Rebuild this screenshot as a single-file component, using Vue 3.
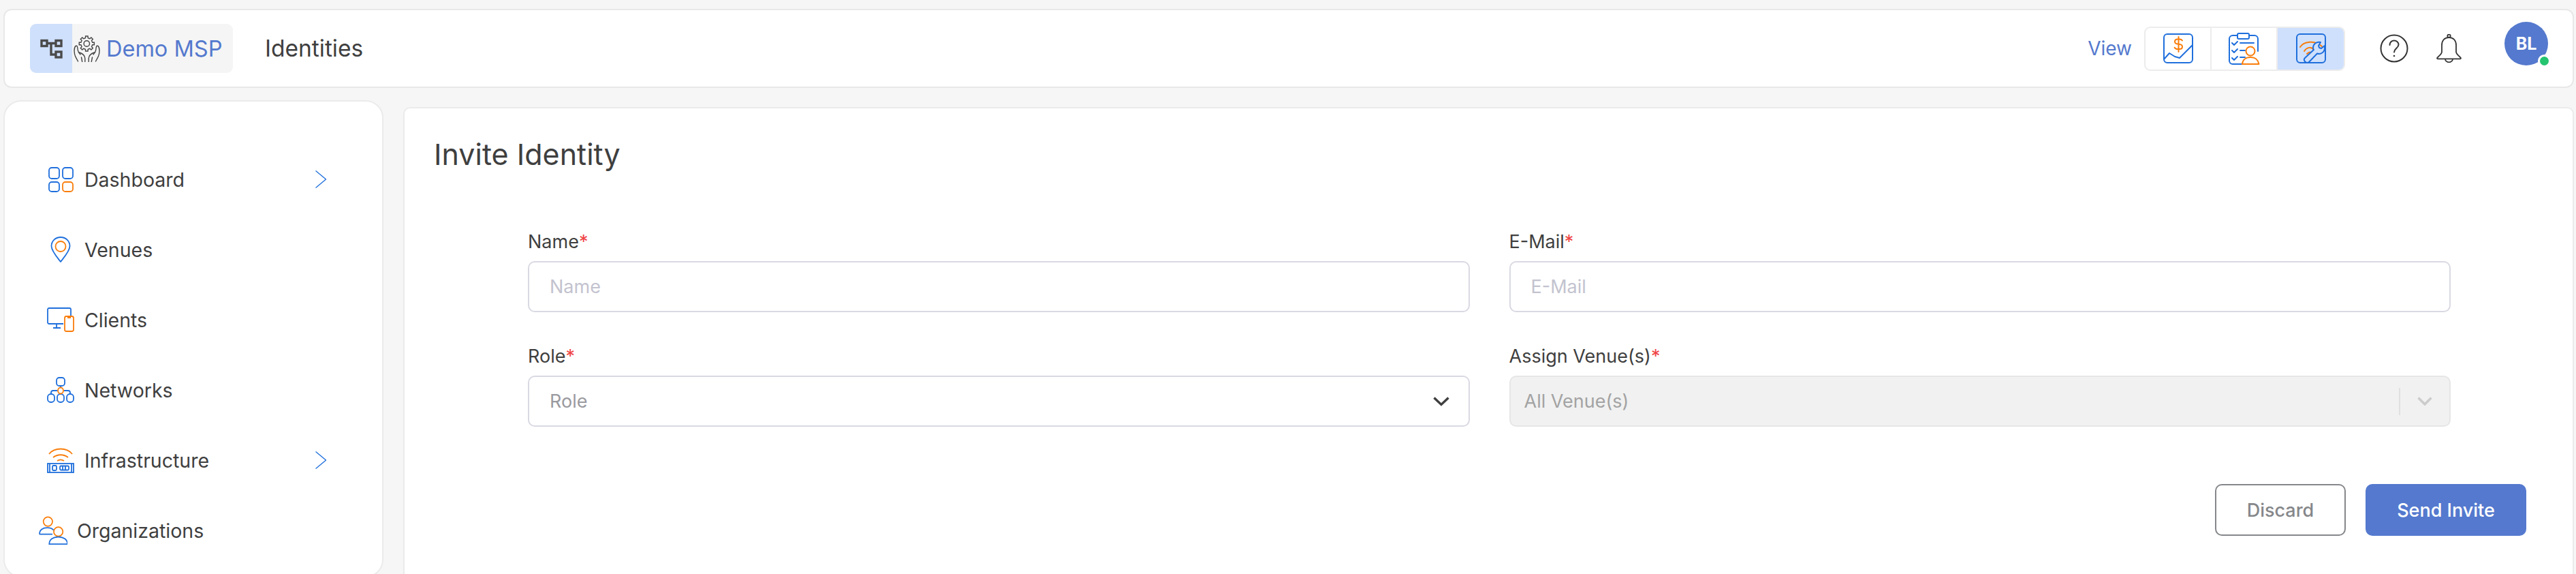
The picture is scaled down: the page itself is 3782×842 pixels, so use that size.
<script setup>
const navItems = [
  { label: 'Dashboard', icon: 'dashboard', arrow: true },
  { label: 'Venues', icon: 'venues' },
  { label: 'Clients', icon: 'clients' },
  { label: 'Networks', icon: 'networks' },
  { label: 'Infrastructure', icon: 'infra', arrow: true },
  { label: 'Organizations', icon: 'orgs' }
];

// gear outline for the MSP logo
const gearPath = (() => {
  const pts = [];
  const teeth = 8;
  for (let i = 0; i < teeth; i++) {
    const a = (i / teeth) * Math.PI * 2;
    const step = (Math.PI * 2) / teeth;
    [[-0.5, 8.4], [-0.27, 8.6], [-0.2, 11.2], [0.2, 11.2], [0.27, 8.6]].forEach(([o, r]) => {
      const t = a + o * step;
      pts.push(`${(18.8 + Math.cos(t) * r).toFixed(2)} ${(12 + Math.sin(t) * r).toFixed(2)}`);
    });
  }
  return 'M' + pts.join(' L') + ' Z';
})();
</script>

<template>
  <div class="page">
    <header class="topbar">
      <div class="crumb">
        <div class="crumb-tree">
          <svg width="33" height="29" viewBox="0 0 33 29" fill="none" stroke="#4a4a4a" stroke-width="3.4">
            <rect x="2" y="2.5" width="8" height="8" />
            <rect x="23" y="2.5" width="8" height="8" />
            <rect x="23" y="19" width="8" height="8" />
            <path d="M10 6.500H23M16 6.500V23H23" />
          </svg>
        </div>
        <div class="crumb-tenant">
          <svg width="39" height="39" viewBox="0 0 38 39" fill="none" stroke="#444" stroke-width="1.4" stroke-linecap="round">
            <path :d="gearPath" />
            <circle cx="18.8" cy="12" r="4.2" />
            <g>
              <path d="M2.5 15.5C0 18 .2 22 1 27c.7 4.500 3 7 5 11" />
              <path d="M2.5 15.5c2.5-1.500 3 2 3.300 6 .3 3 1.800 4.500 3.700 6.500" />
              <path d="M8 25c4.500 1.500 8 4 8.300 8.500V38.500M11 32l1.200 6.500" />
            </g>
            <g transform="translate(38 0) scale(-1 1)">
              <path d="M2.5 15.5C0 18 .2 22 1 27c.7 4.500 3 7 5 11" />
              <path d="M2.5 15.5c2.5-1.500 3 2 3.300 6 .3 3 1.800 4.500 3.700 6.500" />
              <path d="M8 25c4.500 1.500 8 4 8.300 8.500V38.500M11 32l1.200 6.500" />
            </g>
          </svg>
          <span class="tenant-name">Demo MSP</span>
        </div>
      </div>
      <span class="page-name">Identities</span>

      <div class="topbar-right">
        <span class="view-label">View</span>
        <div class="view-toggle">
          <div class="view-opt">
            <svg width="44" height="44" viewBox="0 0 44 44" fill="none" stroke-width="2" stroke-linecap="round" stroke-linejoin="round">
              <rect x="1" y="1" width="42" height="42" rx="5" stroke="#1f6fdc" />
              <path d="M1 38l8-9 8 5 7 2 19-19" stroke="#1f6fdc" stroke-linecap="butt" />
              <path d="M28 10.500c-1-1.500-2.500-2-4-2h-3c-2.500 0-4 1.500-4 3.500s1.500 3.200 4 3.500l3 .4c2.500.3 4 1.500 4 3.600s-1.500 3.500-4 3.500h-3c-2 0-3.500-.8-4.300-2.300M22.500 5v22" stroke="#f97d0b" />
            </svg>
          </div>
          <div class="view-opt">
            <svg class="overflow" width="46" height="46" viewBox="0 0 46 46" fill="none" stroke-width="2" stroke-linecap="round" stroke-linejoin="round">
              <path d="M13 4H6a5 5 0 0 0-5 5v32a5 5 0 0 0 5 5h14M31 4h7a5 5 0 0 1 5 5v18" stroke="#1f6fdc" />
              <rect x="13" y="1" width="17" height="8" rx="2" stroke="#1f6fdc" />
              <path d="M5 15l3 3 5-5M5 26l3 3 5-5M5 37l3 3 5-5M17 15h20M17 26h7M17 36h7" stroke="#1f6fdc" />
              <circle cx="32" cy="27" r="6.500" stroke="#f97d0b" />
              <path d="M20 46c.5-6 5-10 12-10s11.500 4 12.500 10z" stroke="#f97d0b" />
            </svg>
          </div>
          <div class="view-opt active">
            <svg class="overflow" width="44" height="44" viewBox="0 0 44 44" fill="none" stroke-width="2" stroke-linecap="round" stroke-linejoin="round">
              <rect x="1" y="1" width="42" height="42" rx="5" stroke="#1f6fdc" />
              <path d="M6 20C11 12 28 9 38 19M12 26c3-5 9-7 13-3M16 30c2-2 4-3 6-2" stroke="#f97d0b" />
              <path d="M36 13c-6-1.500-11 3-11 8 0 1 0 2 1 3L13 36c-3 3 1 9 6 6l12-12.500c5 2 11-2 11-8v-3.500l-5 4-3-1-1-3z" fill="#cfe0fc" stroke="#1f6fdc" />
            </svg>
          </div>
        </div>
        <svg class="help" width="42" height="42" viewBox="0 0 42 42" fill="none" stroke="#333" stroke-width="2">
          <circle cx="21" cy="21" r="19.500" />
          <path d="M14.500 16c0-4 3-6.500 6.500-6.500s6.500 2.500 6.500 6c0 5-6.500 5.500-6.500 11" stroke-linecap="round" />
          <circle cx="21" cy="32" r="1.300" fill="#333" stroke="none" />
        </svg>
        <svg class="bell" width="37" height="42" viewBox="0 0 37 42" fill="none" stroke="#333" stroke-width="1.800" stroke-linejoin="round">
          <circle cx="18.500" cy="2.800" r="2.200" />
          <path d="M18.500 5c-7 0-10.500 5-10.500 11v10c0 3-3 5-6.500 8.500-.8 1-.5 1.800.5 1.800h33c1 0 1.300-.8.500-1.800C32 31 29 29 29 26V16C29 10 25.500 5 18.500 5z" />
          <path d="M13 36.300c0 3 2.500 5 5.500 5s5.500-2 5.500-5" />
        </svg>
        <div class="avatar">
          BL
          <span class="status"></span>
        </div>
      </div>
    </header>

    <div class="content">
      <aside class="sidebar">
        <nav class="nav">
          <div
            v-for="item in navItems"
            :key="item.label"
            :class="['nav-item', { 'nav-org': item.icon === 'orgs' }]"
          >
            <span class="nav-icon">
              <svg v-if="item.icon === 'dashboard'" width="37" height="37" viewBox="0 0 37 37" fill="none" stroke="#1f6fdc" stroke-width="1.800">
                <rect x="1" y="1" width="15" height="16" rx="4" />
                <rect x="21" y="1" width="15" height="16" rx="4" />
                <rect x="1" y="22" width="15" height="14" rx="4" />
                <rect x="21" y="22" width="15" height="14" rx="4" stroke="#f97d0b" />
              </svg>
              <svg v-else-if="item.icon === 'venues'" width="30" height="38" viewBox="0 0 30 38" fill="none" stroke-width="1.800">
                <path d="M15 1C7 1 1.500 7 1.500 14c0 7 8 16 13.500 23C20.500 30 28.500 21 28.500 14 28.500 7 23 1 15 1z" stroke="#1f6fdc" stroke-linejoin="round" />
                <circle cx="15" cy="14.500" r="7.500" stroke="#f97d0b" />
              </svg>
              <svg v-else-if="item.icon === 'clients'" width="40" height="36" viewBox="0 0 40 36" fill="none" stroke-width="1.800">
                <path d="M24 24H3a2 2 0 0 1-2-2V3a2 2 0 0 1 2-2h30a2 2 0 0 1 2 2v9" stroke="#1f6fdc" />
                <path d="M14 24v6M9 30h11" stroke="#1f6fdc" />
                <rect x="26" y="13" width="13" height="22" rx="2.500" stroke="#f97d0b" />
                <path d="M30 15h5" stroke="#f97d0b" stroke-width="2" />
              </svg>
              <svg v-else-if="item.icon === 'networks'" width="40" height="38" viewBox="0 0 40 38" fill="none" stroke="#1f6fdc" stroke-width="1.800">
                <rect x="14" y="1" width="12" height="12" rx="4" />
                <rect x="1" y="25" width="10" height="12" rx="4.500" />
                <rect x="15" y="25" width="10" height="12" rx="4.500" />
                <rect x="29" y="25" width="10" height="12" rx="4.500" />
                <path d="M20 13v3M6 25v-2a3 3 0 0 1 3-3h6M34 25v-2a3 3 0 0 0-3-3h-6M20 24v1" />
                <ellipse cx="20" cy="20" rx="4" ry="4.500" stroke="#f97d0b" />
              </svg>
              <svg v-else-if="item.icon === 'infra'" width="40" height="38" viewBox="0 0 40 38" fill="none" stroke-width="1.800">
                <path d="M3 10C11 0 29 0 37 10M9 15c6-5 16-5 22 0M15 20c3-2 7-2 10 0" stroke="#f97d0b" />
                <rect x="1" y="24" width="38" height="13" stroke="#1f6fdc" />
                <path d="M4 24v13M36 24v13" stroke="#1f6fdc" />
                <rect x="8" y="27" width="6" height="7" rx="1.500" stroke="#1f6fdc" />
                <rect x="19" y="27.500" width="13" height="6" rx="1.500" stroke="#1f6fdc" />
                <path d="M23 28v5M27 28v5" stroke="#1f6fdc" />
              </svg>
              <svg v-else-if="item.icon === 'orgs'" width="44" height="44" viewBox="0 0 44 44" fill="none" stroke-width="1.800">
                <circle cx="14" cy="8.500" r="7" stroke="#f97d0b" />
                <path d="M1 28c0-7 5-10 12-10 5 0 8 1.500 10 4M1 28h20" stroke="#1f6fdc" />
                <circle cx="30" cy="24" r="7" stroke="#f97d0b" />
                <path d="M16 43c0-7 6-11 14-11s14 4 14 11z" stroke="#1f6fdc" />
              </svg>
            </span>
            <span class="nav-label">{{ item.label }}</span>
            <svg v-if="item.arrow" class="nav-arrow" width="16" height="26" viewBox="0 0 16 26" fill="none" stroke="#1f6fdc" stroke-width="1.300">
              <path d="M.5 .5 15.500 13 .5 25.500" />
            </svg>
          </div>
        </nav>
      </aside>

      <main class="panel">
        <h1 class="panel-title">Invite Identity</h1>
        <form class="form" @submit.prevent>
          <div class="field">
            <label class="field-label">Name<span class="req">*</span></label>
            <input class="control" type="text" placeholder="Name" />
          </div>
          <div class="field">
            <label class="field-label">E-Mail<span class="req">*</span></label>
            <input class="control" type="text" placeholder="E-Mail" />
          </div>
          <div class="field">
            <label class="field-label">Role<span class="req">*</span></label>
            <div class="control select">
              <span class="select-value">Role</span>
              <svg width="24" height="14" viewBox="0 0 24 14" fill="none" stroke="#3f3f3f" stroke-width="3.400">
                <path d="M1.500 1.500 12 11.500 22.500 1.500" />
              </svg>
            </div>
          </div>
          <div class="field">
            <label class="field-label">Assign Venue(s)<span class="req">*</span></label>
            <div class="control select disabled">
              <span class="select-value">All Venue(s)</span>
              <span class="select-sep"></span>
              <svg width="22" height="13" viewBox="0 0 22 13" fill="none" stroke="#cccccc" stroke-width="3.600">
                <path d="M1.500 1.500 11 11 20.500 1.500" />
              </svg>
            </div>
          </div>
        </form>
        <div class="actions">
          <button class="btn btn-ghost" type="button">Discard</button>
          <button class="btn btn-primary" type="button">Send Invite</button>
        </div>
      </main>
    </div>
  </div>
</template>

<style>
html,
body {
  margin: 0;
  background: #f6f6f6;
}
</style>

<style scoped>
.page {
  height: 842px;
  overflow: hidden;
  box-sizing: border-box;
  padding: 13px 3px 0 5px;
  background: #f6f6f6;
  font-family: Inter, "Liberation Sans", sans-serif;
  color: #3f3f3f;
}

.topbar {
  height: 116px;
  box-sizing: border-box;
  display: flex;
  align-items: center;
  padding: 0 36px 0 37px;
  background: #fff;
  border: 2px solid #e8e8e8;
  border-radius: 12px;
}

.crumb {
  display: flex;
  width: 298px;
  height: 72px;
  border-radius: 9px;
  overflow: hidden;
  background: #f5f5f5;
}

.crumb-tree {
  width: 62px;
  display: flex;
  align-items: center;
  justify-content: center;
  background: #cfe0fc;
}

.crumb-tenant {
  display: flex;
  align-items: center;
  padding-left: 2px;
  gap: 9px;
}

.tenant-name {
  font-size: 32.5px;
  color: #5479ce;
  white-space: nowrap;
}

.page-name {
  margin-left: 47px;
  font-size: 33.5px;
}

.topbar-right {
  margin-left: auto;
  display: flex;
  align-items: center;
}

.view-label {
  font-size: 28px;
  color: #5479ce;
  margin-right: 18px;
}

.view-toggle {
  display: flex;
  height: 65px;
  box-sizing: border-box;
  border: 2px solid #ececec;
  border-radius: 9px;
  overflow: hidden;
}

.view-opt {
  width: 97px;
  display: flex;
  align-items: center;
  justify-content: center;
  border-right: 2px solid #ececec;
  box-sizing: border-box;
}

.view-opt:last-child {
  border-right: none;
}

.view-opt.active {
  background: #cfe0fc;
}

.overflow {
  overflow: visible;
}

.help {
  margin-left: 51px;
}

.bell {
  margin-left: 41px;
}

.avatar {
  position: relative;
  width: 64px;
  height: 64px;
  margin-left: 63px;
  margin-bottom: 14px;
  border-radius: 50%;
  background: #5479ce;
  color: #fff;
  font-size: 25px;
  font-weight: 700;
  display: flex;
  align-items: center;
  justify-content: center;
}

.status {
  position: absolute;
  right: -1px;
  bottom: 0;
  width: 13px;
  height: 13px;
  border-radius: 50%;
  background: #25c46f;
  box-shadow: 0 0 0 3px #fff;
}

.content {
  display: flex;
  align-items: flex-start;
  gap: 29px;
}

.sidebar {
  width: 558px;
  height: 700px;
  box-sizing: border-box;
  margin-top: 18px;
  background: #fff;
  border: 2px solid #ebebeb;
  border-radius: 26px;
}

.nav {
  padding-top: 86px;
  display: flex;
  flex-direction: column;
  gap: 47px;
}

.nav-item {
  position: relative;
  height: 56px;
  display: flex;
  align-items: center;
  padding-left: 61px;
  font-size: 28.5px;
}

.nav-icon {
  width: 42px;
  height: 44px;
  display: flex;
  align-items: center;
  justify-content: center;
  margin-right: 14px;
  flex-shrink: 0;
}

.nav-org {
  padding-left: 50px;
}

.nav-arrow {
  margin-left: auto;
  margin-right: 82px;
}

.panel {
  flex: 1;
  height: 700px;
  box-sizing: border-box;
  margin-top: 28px;
  padding: 0 68px 0 43px;
  background: #fff;
  border: 2px solid #ebebeb;
  border-radius: 10px;
}

.panel-title {
  margin: 39px 0 0;
  font-size: 43px;
  line-height: 56px;
  font-weight: 400;
}

.form {
  display: grid;
  grid-template-columns: 1fr 1fr;
  gap: 48px 58px;
  margin: 84px 111px 0 138px;
}

.field-label {
  display: block;
  font-size: 27px;
  line-height: 34px;
  margin-bottom: 11px;
}

.req {
  color: #ef4444;
}

.control {
  width: 100%;
  height: 75px;
  box-sizing: border-box;
  padding: 0 30px;
  background: #fff;
  border: 2px solid #d9d9e3;
  border-radius: 10px;
  font-family: inherit;
  font-size: 27px;
  color: #3f3f3f;
  outline: none;
}

.control::placeholder {
  color: #c3c3cf;
}

.select {
  display: flex;
  align-items: center;
  justify-content: space-between;
  color: #9a9aa0;
  padding-right: 28px;
}

.select.disabled {
  background: #f1f1f1;
  border-color: #e6e6e6;
  padding: 0 25px 0 20px;
  color: #a3a3a3;
}

.select-value {
  flex: 1;
}

.select-sep {
  width: 2px;
  height: 40px;
  margin-right: 25px;
  background: #e0e0e0;
}

.actions {
  display: flex;
  justify-content: flex-end;
  gap: 29px;
  margin-top: 84px;
}

.btn {
  height: 76px;
  box-sizing: border-box;
  border-radius: 10px;
  font-family: inherit;
  font-size: 27px;
  font-weight: 500;
}

.btn-ghost {
  width: 192px;
  background: #fff;
  border: 2px solid #85878a;
  color: #85878a;
}

.btn-primary {
  width: 236px;
  background: #5479ce;
  border: none;
  color: #fff;
}
</style>
